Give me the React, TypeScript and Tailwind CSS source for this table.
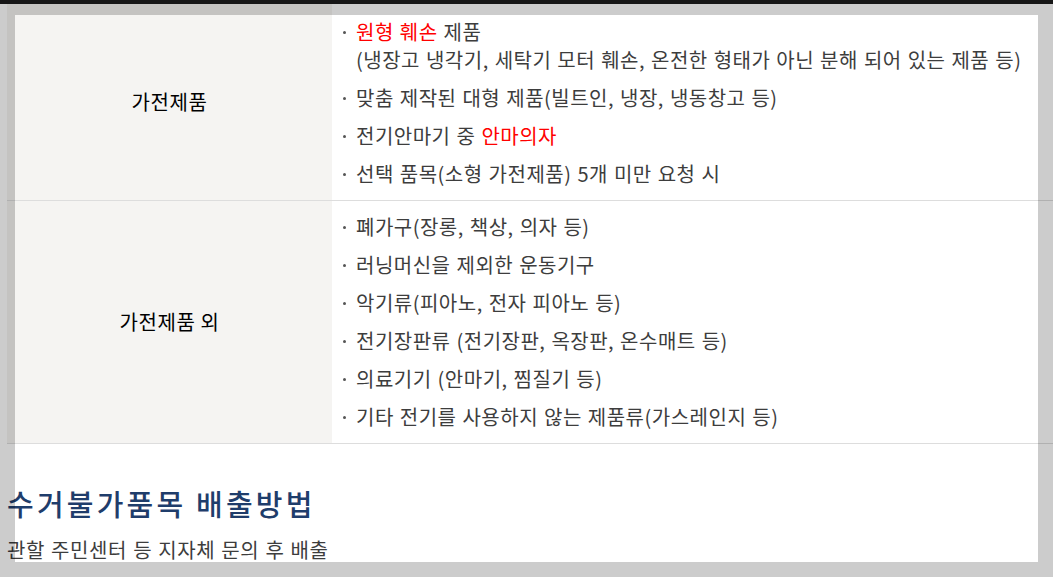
const font = { fontFamily: '"Noto Sans CJK KR", "Noto Sans", sans-serif' };

type Part = { text: string; red?: boolean };

const rows: { label: string; items: Part[][] }[] = [
  {
    label: '가전제품',
    items: [
      [{ text: '원형 훼손', red: true }, { text: ' 제품' }, { text: '\n(냉장고 냉각기, 세탁기 모터 훼손, 온전한 형태가 아닌 분해 되어 있는 제품 등)' }],
      [{ text: '맞춤 제작된 대형 제품(빌트인, 냉장, 냉동창고 등)' }],
      [{ text: '전기안마기 중 ' }, { text: '안마의자', red: true }],
      [{ text: '선택 품목(소형 가전제품) 5개 미만 요청 시' }],
    ],
  },
  {
    label: '가전제품 외',
    items: [
      [{ text: '폐가구(장롱, 책상, 의자 등)' }],
      [{ text: '러닝머신을 제외한 운동기구' }],
      [{ text: '악기류(피아노, 전자 피아노 등)' }],
      [{ text: '전기장판류 (전기장판, 옥장판, 온수매트 등)' }],
      [{ text: '의료기기 (안마기, 찜질기 등)' }],
      [{ text: '기타 전기를 사용하지 않는 제품류(가스레인지 등)' }],
    ],
  },
];

const Item = ({ parts }: { parts: Part[] }) => (
  <li className="flex">
    <span className="w-[13px] shrink-0 flex justify-start pt-[13px]">
      <span className="block w-[3px] h-[3px] rounded-full bg-[#555]" />
    </span>
    <span className="whitespace-pre-line">
      {parts.map((p, i) => (
        <span key={i} className={p.red ? 'text-[#ff0000]' : ''}>{p.text}</span>
      ))}
    </span>
  </li>
);

export default function App() {
  return (
    <div className="relative w-[1053px] h-[577px] overflow-hidden bg-white" style={font}>
      <div className="h-[4px] bg-[#1c1c1c]" />
      <div className="ml-[7px] w-[1060px]">
        {rows.map((row, ri) => (
          <div key={row.label} className="flex border-b border-[#dddddd]">
            <div className="w-[325px] shrink-0 bg-[#f5f4f2] flex items-center justify-center text-[20px] tracking-[0.6px] text-black">
              {row.label}
            </div>
            <ul
              className={`flex-1 pl-[11px] ${ri === 0 ? 'pt-[14px] pb-[12px]' : 'pt-[12px] pb-[12px]'} flex flex-col gap-[10px] text-[20px] leading-[28px] tracking-[0.5px] [word-spacing:1px] text-[#3d3d3d]`}
            >
              {row.items.map((parts, i) => (
                <Item key={i} parts={parts} />
              ))}
            </ul>
          </div>
        ))}
      </div>
      <div className="pl-[7px] pt-[40px]">
        <h3 className="text-[29px] leading-[38px] tracking-[3.2px] text-[#1f3d6b] font-medium">수거불가품목 배출방법</h3>
        <p className="mt-[15px] text-[20px] leading-[26px] tracking-[0.6px] [word-spacing:1px] text-[#3d3d3d]">관할 주민센터 등 지자체 문의 후 배출</p>
      </div>
      <div className="pointer-events-none absolute left-[15px] top-[15px] w-[1023px] h-[547px] shadow-[0_0_0_2000px_rgba(0,0,0,0.2)]" />
    </div>
  );
}
